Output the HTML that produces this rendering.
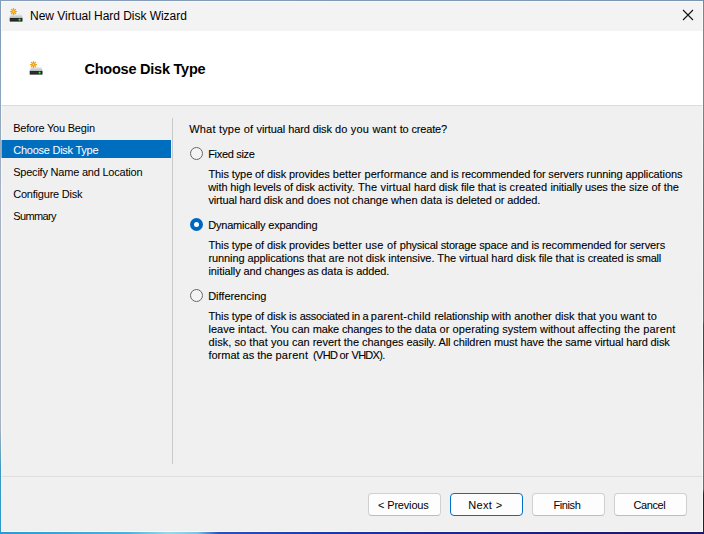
<!DOCTYPE html>
<html><head><meta charset="utf-8">
<style>
html,body{margin:0;padding:0;}
body{width:704px;height:534px;overflow:hidden;position:relative;font-family:"Liberation Sans","DejaVu Sans",sans-serif;color:#000;
background:#1a2a80;}
#bgl{position:absolute;left:0;top:0;width:1px;height:534px;background:linear-gradient(#7f9bb8 0,#8fa5bd 20%,#a4b0c2 35%,#a8b0c0 80%,#3a9ac0 88%,#2a9ad0 100%);}
#bgt{position:absolute;left:0;top:0;width:704px;height:1px;background:linear-gradient(90deg,#879db8,#7c96b2);}
#bgr{position:absolute;left:703px;top:0;width:1px;height:534px;background:linear-gradient(#6a8aaa 0,#5a8fab 19%,#3f72ae 35%,#3a68a8 52%,#3a6ab0 60%,#3a3a98 61%,#3a3a98 68%,#3a6aa8 72%,#3a7fa0 82%,#3a7a9a 91.5%,#1a1a60 92.5%,#1a1a60 100%);}
#bgb{position:absolute;left:0;top:532px;width:704px;height:2px;background:linear-gradient(90deg,#2a9ad0 0,#4ab0dc 18%,#9ad8e8 24%,#7cc4e4 28%,#2a50c0 31%,#1a3ab0 45%,#1a2a98 60%,#1a2088 75%,#1a1a70 85%,#1a1a68 100%);}
#win{position:absolute;left:1px;top:1px;width:702px;height:531px;background:#f0f0f0;overflow:hidden;}
#tb{position:absolute;left:0;top:0;width:702px;height:30px;background:#f3f3f3;}
#hd{position:absolute;left:0;top:30px;width:702px;height:74px;background:#fff;border-bottom:1px solid #dcdcdc;}
#edge{position:absolute;left:0;top:0;width:702px;height:531px;box-shadow:inset 0 0 0 1px rgba(255,255,255,.5);pointer-events:none;}
.ic{position:absolute;}
.x{position:absolute;white-space:nowrap;}
.tt{font-size:12px;line-height:16px;}
.h1{font-size:14.5px;font-weight:bold;line-height:20px;}
.nav{font-size:11px;line-height:16px;}
.w{color:#fff;}
.t{font-size:11px;line-height:13px;-webkit-text-stroke:0.1px #000;}
.bt{font-size:11px;line-height:16px;}
#sel{position:absolute;left:0;top:139px;width:170px;height:18px;background:#006ebf;}
#vs{position:absolute;left:171px;top:117px;width:1px;height:346px;background:#c8c8c8;}
#hs{position:absolute;left:0;top:475px;width:702px;height:1px;background:#dfdfdf;}
.rb{position:absolute;width:11px;height:11px;border:1px solid #666;border-radius:50%;background:#f4f4f4;}
.rb.on{border:none;width:13px;height:13px;background:#0067c0;}
.rb.on::after{content:"";position:absolute;left:4px;top:4px;width:5px;height:5px;border-radius:50%;background:#fff;}
.btn{position:absolute;top:492px;width:71px;height:21px;border:1px solid #d0d0d0;border-bottom-color:#bdbdbd;border-radius:4px;background:#fdfdfd;}
.btn.def{border-color:#0070cc;}
</style></head><body>
<div id="bgl"></div><div id="bgt"></div><div id="bgr"></div><div id="bgb"></div>
<div id="win">
<svg width="0" height="0" style="position:absolute"><defs>
<linearGradient id="g1" x1="0" y1="0" x2="0" y2="1"><stop offset="0" stop-color="#eceef1"/><stop offset="1" stop-color="#b2b7bd"/></linearGradient>
<radialGradient id="g2"><stop offset="0" stop-color="#ffd24a"/><stop offset="1" stop-color="#f29a00"/></radialGradient>
</defs></svg>
 <div id="tb">
 <svg style="position:absolute;left:680px;top:7px" width="14" height="14" viewBox="0 0 14 14"><path d="M2 2 L12 12 M12 2 L2 12" stroke="#111" stroke-width="1.1" fill="none"/></svg>
 </div>
 <div id="hd"></div>
 <svg class="ic" style="left:7px;top:6px" width="16" height="16" viewBox="0 0 16 16">
<path d="M3 7.1 H13.2 L14.8 11 H1.4 Z" fill="url(#g1)"/>
<rect x="1.4" y="10.7" width="13.4" height="4.3" rx="0.8" fill="#c4c8cc"/>
<rect x="1.8" y="10.9" width="12.6" height="3.7" rx="0.5" fill="#242424"/>
<rect x="2.2" y="12.4" width="8" height="0.5" fill="#3c3c3c"/>
<circle cx="11.6" cy="12.7" r="1.4" fill="#1c8a24" opacity=".6"/>
<circle cx="11.6" cy="12.7" r="0.9" fill="#38f048"/>
<g stroke="#f0a010" stroke-width="1.25" stroke-linecap="round">
<path d="M5.5 1.5 V7.5 M2.5 4.5 H8.5 M3.4 2.4 L7.6 6.6 M7.6 2.4 L3.4 6.6"/>
</g>
<circle cx="5.5" cy="4.5" r="1.9" fill="url(#g2)"/>
</svg>
 <svg class="ic" style="left:27px;top:59px" width="16" height="16" viewBox="0 0 16 16">
<path d="M3 7.1 H13.2 L14.8 11 H1.4 Z" fill="url(#g1)"/>
<rect x="1.4" y="10.7" width="13.4" height="4.3" rx="0.8" fill="#c4c8cc"/>
<rect x="1.8" y="10.9" width="12.6" height="3.7" rx="0.5" fill="#242424"/>
<rect x="2.2" y="12.4" width="8" height="0.5" fill="#3c3c3c"/>
<circle cx="11.6" cy="12.7" r="1.4" fill="#1c8a24" opacity=".6"/>
<circle cx="11.6" cy="12.7" r="0.9" fill="#38f048"/>
<g stroke="#f0a010" stroke-width="1.25" stroke-linecap="round">
<path d="M5.5 1.5 V7.5 M2.5 4.5 H8.5 M3.4 2.4 L7.6 6.6 M7.6 2.4 L3.4 6.6"/>
</g>
<circle cx="5.5" cy="4.5" r="1.9" fill="url(#g2)"/>
</svg>
 <div id="sel"></div>
 <div id="vs"></div>
 <div class="rb" style="left:189px;top:146px"></div>
 <div class="rb on" style="left:189px;top:217px"></div>
 <div class="rb" style="left:189px;top:288px"></div>
 <div id="hs"></div>
 <div class="btn" style="left:367px"></div>
 <div class="btn def" style="left:449px"></div>
 <div class="btn" style="left:531px"></div>
 <div class="btn" style="left:613px"></div>
 <div id="tt" class="x tt" style="left:29.10px;top:7px;letter-spacing:-0.041px">New Virtual Hard Disk Wizard</div>
 <div id="h1" class="x h1" style="left:83.50px;top:58px;letter-spacing:-0.233px">Choose Disk Type</div>
 <div id="n1" class="x nav" style="left:12.20px;top:119px;letter-spacing:-0.213px">Before You Begin</div>
 <div id="n2" class="x nav w" style="left:12.20px;top:141px;letter-spacing:-0.247px">Choose Disk Type</div>
 <div id="n3" class="x nav" style="left:12.20px;top:163px;letter-spacing:-0.217px">Specify Name and Location</div>
 <div id="n4" class="x nav" style="left:12.20px;top:185px;letter-spacing:-0.208px">Configure Disk</div>
 <div id="n5" class="x nav" style="left:12.20px;top:207px;letter-spacing:-0.617px">Summary</div>
 <div id="q" class="x t" style="left:188.20px;top:122px"><span style="letter-spacing:0.192px">What type of </span><span style="letter-spacing:-0.094px">virtual hard disk </span><span style="letter-spacing:0.202px">do you want </span><span style="letter-spacing:-0.162px">to create?</span></div>
 <div id="fx" class="x t" style="left:207.20px;top:147px;letter-spacing:-0.311px">Fixed size</div>
 <div id="p11" class="x t" style="left:207.50px;top:167px"><span style="letter-spacing:-0.110px">This type of disk provides </span><span style="letter-spacing:0.079px">better performance </span><span style="letter-spacing:-0.155px">and is recommended for </span><span style="letter-spacing:-0.106px">servers running applications</span></div>
 <div id="p12" class="x t" style="left:207.30px;top:180px"><span style="letter-spacing:-0.116px">with high levels of disk </span><span style="letter-spacing:0.135px">activity. The virtual </span><span style="letter-spacing:-0.074px">hard disk file that is </span><span style="letter-spacing:0.144px">created </span><span style="letter-spacing:-0.144px">initially uses </span><span style="letter-spacing:-0.012px">the size of the</span></div>
 <div id="p13" class="x t" style="left:207.50px;top:193px"><span style="letter-spacing:-0.166px">virtual hard disk </span><span style="letter-spacing:-0.016px">and does not change </span><span style="letter-spacing:0.029px">when data is </span><span style="letter-spacing:-0.102px">deleted or added.</span></div>
 <div id="dy" class="x t" style="left:207.20px;top:218px;letter-spacing:-0.190px">Dynamically expanding</div>
 <div id="p21" class="x t" style="left:207.50px;top:238px"><span style="letter-spacing:-0.110px">This type of disk provides </span><span style="letter-spacing:0.200px">better use of </span><span style="letter-spacing:-0.211px">physical </span><span style="letter-spacing:-0.151px">storage space and is </span><span style="letter-spacing:-0.101px">recommended for servers</span></div>
 <div id="p22" class="x t" style="left:207.50px;top:251px"><span style="letter-spacing:-0.105px">running applications </span><span style="letter-spacing:-0.012px">that are not disk </span><span style="letter-spacing:-0.032px">intensive. The virtual </span><span style="letter-spacing:-0.035px">hard disk file that is </span><span style="letter-spacing:-0.143px">created </span><span style="letter-spacing:-0.259px">is small</span></div>
 <div id="p23" class="x t" style="left:207.50px;top:264px"><span style="letter-spacing:-0.105px">initially and </span><span style="letter-spacing:-0.229px">changes as </span><span style="letter-spacing:-0.079px">data is added.</span></div>
 <div id="df" class="x t" style="left:207.20px;top:289px;letter-spacing:-0.027px">Differencing</div>
 <div id="p31" class="x t" style="left:207.50px;top:309px"><span style="letter-spacing:-0.111px">This type of disk is </span><span style="letter-spacing:-0.300px;word-spacing:-0.179px">associated in a </span><span style="letter-spacing:0.221px">parent-child </span><span style="letter-spacing:-0.155px">relationship </span><span style="letter-spacing:0.030px">with another disk that </span><span style="letter-spacing:0.140px">you want to</span></div>
 <div id="p32" class="x t" style="left:207.50px;top:322px"><span style="letter-spacing:0.011px">leave intact. You can </span><span style="letter-spacing:-0.159px">make changes to the </span><span style="letter-spacing:0.071px">data or operating </span><span style="letter-spacing:-0.020px">system without </span><span style="letter-spacing:0.191px">affecting the parent</span></div>
 <div id="p33" class="x t" style="left:207.50px;top:335px"><span style="letter-spacing:0.053px">disk, so that you </span><span style="letter-spacing:-0.020px">can revert the changes </span><span style="letter-spacing:-0.108px">easily. All children </span><span style="letter-spacing:-0.063px">must have the same </span><span style="letter-spacing:-0.131px">virtual hard disk</span></div>
 <div id="p34" class="x t" style="left:207.50px;top:348px"><span style="letter-spacing:-0.025px">format as the </span><span style="letter-spacing:0.300px;word-spacing:1.154px">parent </span><span style="letter-spacing:-0.589px;word-spacing:-0.400px">(VHD </span><span style="letter-spacing:-0.279px">or </span><span style="letter-spacing:-0.713px">VHDX).</span></div>
 <div id="b1" class="x bt" style="left:377.10px;top:496px;letter-spacing:-0.178px">&lt; Previous</div>
 <div id="b2" class="x bt" style="left:467.20px;top:496px;letter-spacing:0.360px">Next &gt;</div>
 <div id="b3" class="x bt" style="left:552.50px;top:496px;letter-spacing:-0.400px">Finish</div>
 <div id="b4" class="x bt" style="left:632.50px;top:496px;letter-spacing:-0.400px">Cancel</div>
 <div id="edge"></div>
</div>
</body></html>
